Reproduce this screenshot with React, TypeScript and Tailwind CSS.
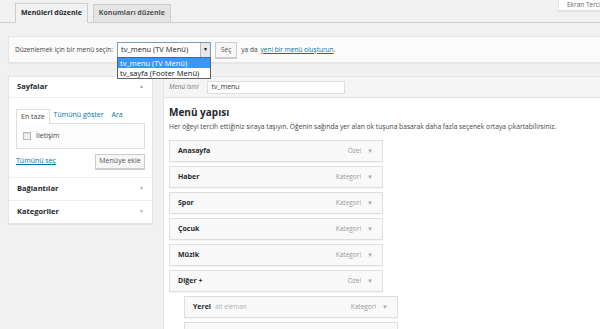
import React from "react";

const items = [
  { t: "Anasayfa", k: "Özel" },
  { t: "Haber", k: "Kategori" },
  { t: "Spor", k: "Kategori" },
  { t: "Çocuk", k: "Kategori" },
  { t: "Müzik", k: "Kategori" },
  { t: "Diğer +", k: "Özel" },
];

function Caret() {
  return <span className="ml-[6px] text-[6px] text-[#aaa] leading-none">▼</span>;
}

function MenuItem({ t, k, sub }: { t: string; k: string; sub?: string }) {
  return (
    <div className="w-[214px] h-[22px] flex items-center justify-between border border-[#dfdfdf] bg-[#f9f9f9] px-[8px] shadow-[0_1px_1px_rgba(0,0,0,0.04)]">
      <div className="flex items-baseline">
        <span className="text-[7px] font-bold text-[#23282d]">{t}</span>
        {sub ? <span className="ml-[4px] text-[6.5px] text-[#b0b0b0]">{sub}</span> : null}
      </div>
      <div className="flex items-center pr-[1px]">
        <span className="text-[6.5px] text-[#999]">{k}</span>
        <Caret />
      </div>
    </div>
  );
}

export default function App() {
  return (
    <div className="w-[600px] h-[329px] overflow-hidden bg-[#f1f1f1] font-['Open_Sans',sans-serif] text-[#444] relative">
      {/* top bar with tabs */}
      <div className="flex justify-between items-start border-b border-[#ccc] h-[23px]">
        <div className="flex items-end h-[22px] pl-[15px] gap-[5px]">
          <div className="h-[20px] px-[5px] flex items-center border border-[#ccc] border-b-0 bg-[#f1f1f1] text-[7px] font-bold text-[#23282d] relative top-[1px]">
            Menüleri düzenle
          </div>
          <div className="h-[18px] px-[5px] flex items-center border border-[#ccc] border-b-0 bg-[#e4e4e4] text-[7px] font-bold text-[#555]">
            Konumları düzenle
          </div>
        </div>
        <div className="h-[11px] w-[60px] -mr-[18px] bg-white border border-[#e5e5e5] border-t-0 shadow-[0_1px_1px_rgba(0,0,0,0.06)] text-[6.5px] text-[#666] pl-[8px] leading-[10px] whitespace-nowrap">
          Ekran Tercihleri
        </div>
      </div>

      {/* select bar */}
      <div className="mt-[13px] ml-[8px] -mr-[10px] h-[27px] bg-[#fbfbfb] border border-[#e5e5e5] shadow-[0_1px_1px_rgba(0,0,0,0.04)] flex items-center pl-[6px] relative">
        <span className="text-[6.5px] text-[#444]">Düzenlemek için bir menü seçin:</span>
        <div className="relative ml-[4px]">
          <div className="w-[94px] h-[16px] bg-white border border-[#7f9db9] flex items-center">
            <span className="flex-1 text-[7.5px] text-[#222] pl-[3px]">tv_menu (TV Menü)</span>
            <div className="w-[10px] h-[14px] bg-[#e8e8e8] border-l border-[#bbb] flex items-center justify-center">
              <span className="text-[5px] text-black leading-none">▼</span>
            </div>
          </div>
          <div className="absolute left-0 top-[15px] w-[94px] bg-white border border-[#646464] z-10">
            <div className="h-[10px] bg-[#3399ff] text-white text-[7.5px] leading-[10px] pl-[2px]">tv_menu (TV Menü)</div>
            <div className="h-[10px] text-[#111] text-[7.5px] leading-[10px] pl-[2px]">tv_sayfa (Footer Menü)</div>
          </div>
        </div>
        <div className="ml-[4px] h-[16px] px-[5px] flex items-center border border-[#ccc] bg-[#f7f7f7] text-[6.5px] text-[#555] shadow-[0_1px_0_#ccc]">Seç</div>
        <span className="ml-[4px] text-[6.5px] text-[#444]">ya da</span>
        <span className="ml-[3px] text-[6.5px] text-[#0073aa] underline">yeni bir menü oluşturun</span>
        <span className="text-[6.5px] text-[#444]">.</span>
      </div>

      {/* columns */}
      <div className="flex mt-[13px] ml-[8px] gap-[10px] items-start">
        {/* left */}
        <div className="w-[145px] bg-white border border-[#e5e5e5] shadow-[0_1px_1px_rgba(0,0,0,0.06)]">
          <div className="h-[21px] flex items-center justify-between px-[8px] border-b border-[#eee]">
            <span className="text-[7.5px] font-bold text-[#23282d]">Sayfalar</span>
            <span className="text-[5px] text-[#aaa]">▲</span>
          </div>
          <div className="px-[7px] pt-[10px] pb-[8px] border-b border-[#eee]">
            <div className="flex items-end text-[7px]">
              <div className="h-[15px] px-[4px] flex items-center border border-[#ddd] border-b-0 bg-white text-[#444] relative top-[1px]">En taze</div>
              <span className="ml-[4px] text-[#0073aa] pb-[3px]">Tümünü göster</span>
              <span className="ml-[8px] text-[#0073aa] pb-[3px]">Ara</span>
            </div>
            <div className="h-[26px] border border-[#ddd] bg-[#fdfdfd] flex items-center pl-[6px]">
              <div className="w-[8px] h-[8px] border border-[#bbb] bg-[#f3f3f3] shadow-[inset_0_1px_2px_rgba(0,0,0,0.1)]" />
              <span className="ml-[5px] text-[7px] text-[#444]">İletişim</span>
            </div>
            <div className="flex items-center justify-between mt-[5px]">
              <span className="text-[7px] text-[#0073aa] underline">Tümünü seç</span>
              <div className="h-[15px] w-[50px] flex items-center justify-center border border-[#ccc] bg-[#f7f7f7] text-[7px] text-[#555] shadow-[0_1px_0_#ccc]">Menüye ekle</div>
            </div>
          </div>
          <div className="h-[23px] flex items-center justify-between px-[8px] border-b border-[#eee]">
            <span className="text-[7.5px] font-bold text-[#23282d]">Bağlantılar</span>
            <span className="text-[5px] text-[#aaa]">▼</span>
          </div>
          <div className="h-[22px] flex items-center justify-between px-[8px]">
            <span className="text-[7.5px] font-bold text-[#23282d]">Kategoriler</span>
            <span className="text-[5px] text-[#aaa]">▼</span>
          </div>
        </div>

        {/* right */}
        <div className="flex-1 -mr-[40px] bg-white border border-[#e5e5e5] min-h-[260px]">
          <div className="h-[21px] bg-[#f5f5f5] border-b border-[#dfdfdf] flex items-center pl-[5px]">
            <span className="text-[6.5px] italic text-[#777]">Menü ismi</span>
            <div className="ml-[8px] w-[138px] h-[13px] bg-white border border-[#ddd] flex items-center pl-[4px] text-[7px] text-[#333]">tv_menu</div>
          </div>
          <div className="pl-[5px] pt-[8px]">
            <div className="text-[10px] font-bold text-[#23282d] leading-[12px]">Menü yapısı</div>
            <div className="mt-[4px] text-[6.7px] text-[#444] leading-[9px]">
              Her öğeyi tercih ettiğiniz sıraya taşıyın. Öğenin sağında yer alan ok tuşuna basarak daha fazla seçenek ortaya çıkartabilirsiniz.
            </div>
            <div className="mt-[9px] flex flex-col gap-[4px]">
              {items.map((it) => (
                <MenuItem key={it.t} t={it.t} k={it.k} />
              ))}
              <div className="pl-[15px] flex flex-col gap-[4px]">
                <MenuItem t="Yerel" sub="alt eleman" k="Kategori" />
                <MenuItem t="" k="" />
              </div>
            </div>
          </div>
        </div>
      </div>
    </div>
  );
}
